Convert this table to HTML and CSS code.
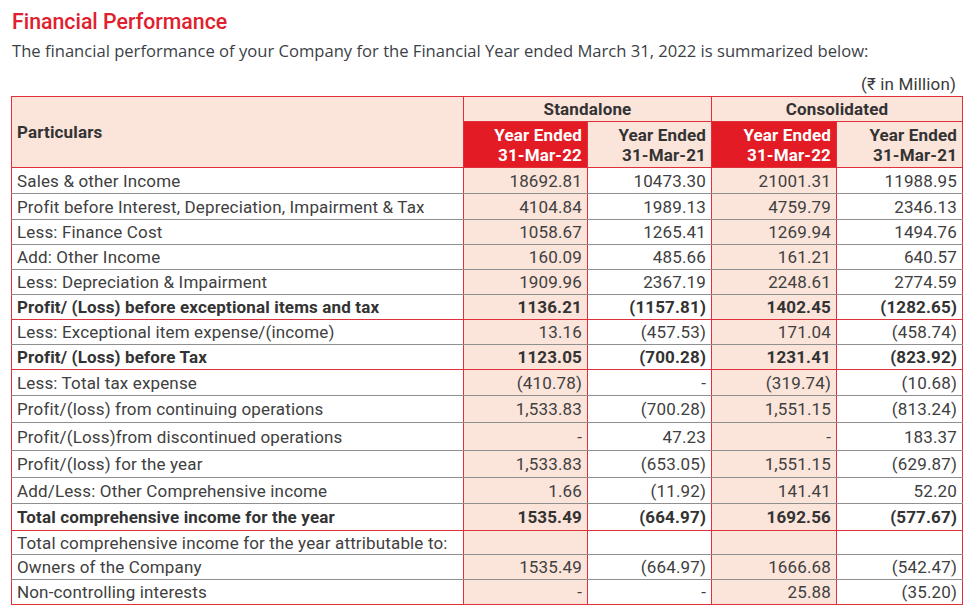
FILE: index.html
```html
<!DOCTYPE html>
<html>
<head>
<meta charset="utf-8">
<link rel="stylesheet" href="styles.css">
</head>
<body>
<div class="page">
  <h1 class="title">Financial Performance</h1>
  <p class="intro">The financial performance of your Company for the Financial Year ended March 31, 2022 is summarized below:</p>
  <div class="unit">(₹ in Million)</div>
  <table class="fin">
    <colgroup>
      <col class="c0"><col class="c1"><col class="c2"><col class="c3"><col class="c4">
    </colgroup>
    <thead>
      <tr class="h1">
        <th rowspan="2" class="part">Particulars</th>
        <th colspan="2" class="grp">Standalone</th>
        <th colspan="2" class="grp">Consolidated</th>
      </tr>
      <tr class="h2">
        <th class="yr cur">Year Ended<br>31-Mar-22</th>
        <th class="yr">Year Ended<br>31-Mar-21</th>
        <th class="yr cur">Year Ended<br>31-Mar-22</th>
        <th class="yr">Year Ended<br>31-Mar-21</th>
      </tr>
    </thead>
    <tbody>
      <tr class="r26"><td>Sales &amp; other Income</td><td class="n hl">18692.81</td><td class="n">10473.30</td><td class="n hl">21001.31</td><td class="n">11988.95</td></tr>
      <tr class="r26"><td>Profit before Interest, Depreciation, Impairment &amp; Tax</td><td class="n hl">4104.84</td><td class="n">1989.13</td><td class="n hl">4759.79</td><td class="n">2346.13</td></tr>
      <tr class="r25"><td>Less: Finance Cost</td><td class="n hl">1058.67</td><td class="n">1265.41</td><td class="n hl">1269.94</td><td class="n">1494.76</td></tr>
      <tr class="r25"><td>Add: Other Income</td><td class="n hl">160.09</td><td class="n">485.66</td><td class="n hl">161.21</td><td class="n">640.57</td></tr>
      <tr class="r25"><td>Less: Depreciation &amp; Impairment</td><td class="n hl">1909.96</td><td class="n">2367.19</td><td class="n hl">2248.61</td><td class="n">2774.59</td></tr>
      <tr class="r25 b"><td>Profit/ (Loss) before exceptional items and tax</td><td class="n hl">1136.21</td><td class="n">(1157.81)</td><td class="n hl">1402.45</td><td class="n">(1282.65)</td></tr>
      <tr class="r25"><td>Less: Exceptional item expense/(income)</td><td class="n hl">13.16</td><td class="n">(457.53)</td><td class="n hl">171.04</td><td class="n">(458.74)</td></tr>
      <tr class="r25 b"><td>Profit/ (Loss) before Tax</td><td class="n hl">1123.05</td><td class="n">(700.28)</td><td class="n hl">1231.41</td><td class="n">(823.92)</td></tr>
      <tr class="r26"><td>Less: Total tax expense</td><td class="n hl">(410.78)</td><td class="n">-</td><td class="n hl">(319.74)</td><td class="n">(10.68)</td></tr>
      <tr class="r27"><td>Profit/(loss) from continuing operations</td><td class="n hl">1,533.83</td><td class="n">(700.28)</td><td class="n hl">1,551.15</td><td class="n">(813.24)</td></tr>
      <tr class="r28"><td>Profit/(Loss)from discontinued operations</td><td class="n hl">-</td><td class="n">47.23</td><td class="n hl">-</td><td class="n">183.37</td></tr>
      <tr class="r27"><td>Profit/(loss) for the year</td><td class="n hl">1,533.83</td><td class="n">(653.05)</td><td class="n hl">1,551.15</td><td class="n">(629.87)</td></tr>
      <tr class="r26"><td>Add/Less: Other Comprehensive income</td><td class="n hl">1.66</td><td class="n">(11.92)</td><td class="n hl">141.41</td><td class="n">52.20</td></tr>
      <tr class="r27 b"><td>Total comprehensive income for the year</td><td class="n hl">1535.49</td><td class="n">(664.97)</td><td class="n hl">1692.56</td><td class="n">(577.67)</td></tr>
      <tr class="r24"><td>Total comprehensive income for the year attributable to:</td><td class="n hl"></td><td class="n"></td><td class="n hl"></td><td class="n"></td></tr>
      <tr class="r25"><td>Owners of the Company</td><td class="n hl">1535.49</td><td class="n">(664.97)</td><td class="n hl">1666.68</td><td class="n">(542.47)</td></tr>
      <tr class="r25 last"><td>Non-controlling interests</td><td class="n hl">-</td><td class="n">-</td><td class="n hl">25.88</td><td class="n">(35.20)</td></tr>
    </tbody>
  </table>
</div>
</body>
</html>
```

FILE: styles.css
```css
html, body {
  margin: 0;
  padding: 0;
  background: #ffffff;
}

.page {
  padding: 9px 14px 0 11px;
  font-family: Roboto, "Liberation Sans", Arial, sans-serif;
  color: #404040;
}

.title {
  margin: 0 0 0 1px;
  font-family: Roboto, "Liberation Sans", sans-serif;
  font-size: 21.3px;
  font-weight: 500;
  line-height: 26px;
  color: #e0202e;
}

.intro {
  margin: 4px 0 0 1px;
  font-family: "Open Sans", Roboto, sans-serif;
  font-size: 16.6px;
  line-height: 24px;
  color: #3c3f46;
}

.unit {
  text-align: right;
  font-size: 17px;
  letter-spacing: 0.15px;
  line-height: 20px;
  margin-top: 11px;
  padding-right: 5px;
  color: #3a3a3a;
}

.fin {
  border-collapse: collapse;
  width: 951px;
  margin-top: 2px;
  font-size: 17px;
  letter-spacing: 0.15px;
  table-layout: fixed;
}

.c0 { width: 452px; }
.c1 { width: 124px; }
.c2 { width: 124px; }
.c3 { width: 125px; }
.c4 { width: 126px; }

.fin th,
.fin td {
  padding: 0 5px;
  border-left: 1px solid #e0303c;
  border-right: 1px solid #e0303c;
  border-top: 1px solid #8f8f8f;
  border-bottom: 1px solid #8f8f8f;
  line-height: 20px;
  white-space: nowrap;
}

.fin thead th {
  background: #fbe4da;
  border-top: 1px solid #e0303c;
  border-bottom: 1px solid #e0303c;
  font-weight: 700;
  color: #333333;
}

.h1 { height: 25px; }
.h2 { height: 46px; }

.part {
  text-align: left;
  vertical-align: middle;
}

.grp {
  text-align: center;
}

.yr {
  text-align: right;
  line-height: 22px;
  vertical-align: middle;
}

.fin thead th.cur {
  background: #e31b25;
  color: #ffffff;
}

.n {
  text-align: right;
}

.hl {
  background: #fbe4da;
}

.b td {
  font-weight: 700;
  color: #333333;
  border-top: 1px solid #e0303c;
  border-bottom: 1px solid #e0303c;
}

.last td {
  border-bottom: 1px solid #e0303c;
}

.r24 { height: 24px; }
.r25 { height: 25px; }
.r26 { height: 26px; }
.r27 { height: 27px; }
.r28 { height: 28px; }
```
